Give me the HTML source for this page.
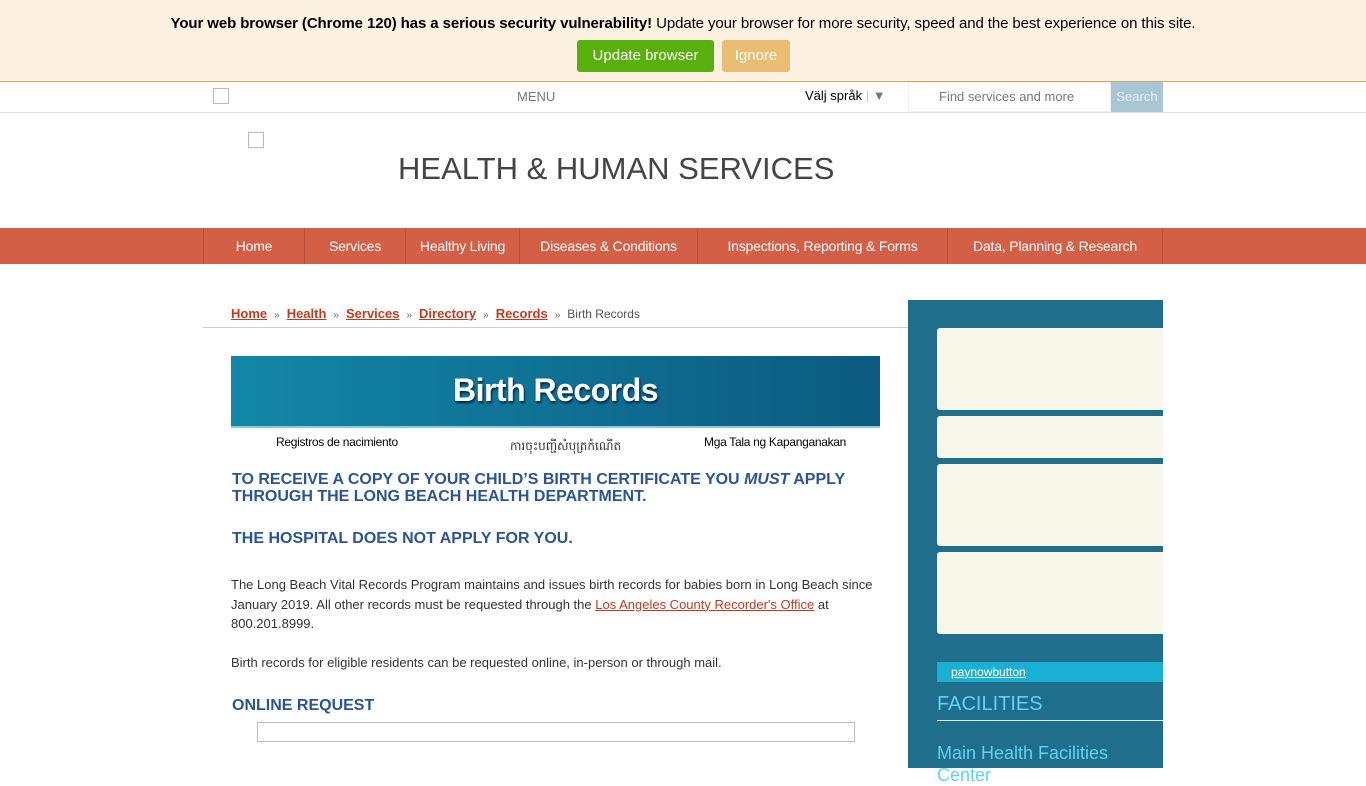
<!DOCTYPE html>
<html><head><meta charset="utf-8"><style>
*{box-sizing:border-box;margin:0;padding:0}
body{width:1366px;height:768px;overflow:hidden;font-family:"Liberation Sans",Arial,sans-serif;background:#fff;position:relative}
.abs{position:absolute}
#bar{left:0;top:0;width:1366px;height:82px;background:#fdf2e1;border-bottom:1px solid #c9a95c;text-align:center}
#bar p{position:absolute;top:15px;left:0;width:1366px;font-size:15px;color:#000;letter-spacing:-0.1px}
.btn{position:absolute;top:40px;height:32px;line-height:32px;color:#fff;font-size:15px;border-radius:3px;text-align:center}
#top{left:0;top:82px;width:1366px;height:31px;border-bottom:1px solid #ddd}
#nav{left:0;top:228px;width:1366px;height:36px;background:#d35f47}
#nav div{position:absolute;top:0;height:36px;line-height:36px;color:#fff;font-size:14px;text-align:center;border-left:1px solid #b94f3a;letter-spacing:-0.2px}
.bc a{color:#c23b1f;font-size:13px;text-decoration:underline;font-weight:bold}
.bc span{color:#666;font-size:10px;margin:0 7px}
h3{position:absolute;left:232px;color:#2a5592;font-size:16px;font-weight:bold;line-height:17px}
.t{position:absolute;left:231px;font-size:13px;color:#333;line-height:19.5px;width:650px}
.card{position:absolute;left:937px;width:226px;background:#f9f6ea;border-radius:3px 0 0 3px}
</style></head><body>
<div id="bar" class="abs"><p><b>Your web browser (Chrome 120) has a serious security vulnerability!</b> Update your browser for more security, speed and the best experience on this site.</p>
<div class="btn" style="left:577px;width:137px;background:#59b00d">Update browser</div>
<div class="btn" style="left:722px;width:68px;background:#e9be72">Ignore</div></div>
<div id="top" class="abs">
<div class="abs" style="left:213px;top:6px;width:16px;height:16px;border:1px solid #bbb"></div>
<div class="abs" style="left:517px;top:7px;font-size:13px;color:#777">MENU</div>
<div class="abs" style="left:805px;top:6px;font-size:13px;color:#000">Välj språk <span style="color:#ccc">|</span> <span style="color:#777">▼</span></div>
<div class="abs" style="left:908px;top:0;width:203px;height:30px;border:1px solid #eee;font-size:13px;color:#777;line-height:28px;padding-left:30px">Find services and more</div>
<div class="abs" style="left:1111px;top:0;width:52px;height:30px;background:#a9c6d4;color:#eef;font-size:13px;line-height:30px;text-align:center">Search</div>
</div>
<div class="abs" style="left:248px;top:132px;width:16px;height:16px;border:1px solid #bbb"></div>
<div class="abs" style="left:398px;top:151px;font-size:31px;color:#444">HEALTH &amp; HUMAN SERVICES</div>
<div id="nav" class="abs">
<div style="left:203px;width:101px">Home</div><div style="left:304px;width:101px">Services</div><div style="left:405px;width:114px">Healthy Living</div><div style="left:519px;width:178px">Diseases &amp; Conditions</div><div style="left:697px;width:250px">Inspections, Reporting &amp; Forms</div><div style="left:947px;width:216px;border-right:1px solid #b94f3a">Data, Planning &amp; Research</div></div>
<div class="abs bc" style="left:231px;top:305px"><a>Home</a><span>»</span><a>Health</a><span>»</span><a>Services</a><span>»</span><a>Directory</a><span>»</span><a>Records</a><span>»</span><font style="font-size:12px;color:#555">Birth Records</font></div>
<div class="abs" style="left:203px;top:327px;width:705px;height:1px;background:#ccc"></div>
<div class="abs" style="left:231px;top:356px;width:649px;height:70px;background:linear-gradient(90deg,#1287a8,#0c5a80);color:#fff;font-size:32px;font-weight:bold;text-align:center;line-height:68px;text-shadow:1px 2px 2px #024;letter-spacing:-0.5px">Birth Records</div>
<div class="abs" style="left:231px;top:426px;width:649px;height:2px;background:#8cc8dc"></div>
<div class="abs" style="left:276px;top:435px;font-size:12px;letter-spacing:-0.3px">Registros de nacimiento</div>
<div class="abs" style="left:510px;top:438px;font-size:12px;color:#333">ការចុះបញ្ជីសំបុត្រកំណើត</div>
<div class="abs" style="left:704px;top:435px;font-size:12px;letter-spacing:-0.3px">Mga Tala ng Kapanganakan</div>
<h3 style="top:471px">TO RECEIVE A COPY OF YOUR CHILD’S BIRTH CERTIFICATE YOU <i>MUST</i> APPLY<br>THROUGH THE LONG BEACH HEALTH DEPARTMENT.</h3>
<h3 style="top:530px">THE HOSPITAL DOES NOT APPLY FOR YOU.</h3>
<div class="t" style="top:575px">The Long Beach Vital Records Program maintains and issues birth records for babies born in Long Beach since January 2019. All other records must be requested through the <a style="color:#c23b1f;text-decoration:underline">Los Angeles County Recorder's Office</a> at 800.201.8999.</div>
<div class="t" style="top:653px">Birth records for eligible residents can be requested online, in-person or through mail.</div>
<h3 style="top:697px">ONLINE REQUEST</h3>
<div class="abs" style="left:257px;top:722px;width:598px;height:20px;border:1px solid #bbb"></div>
<div class="abs" style="left:908px;top:300px;width:255px;height:468px;background:#1f6e8c"></div>
<div class="card" style="top:328px;height:82px"></div>
<div class="card" style="top:416px;height:42px"></div>
<div class="card" style="top:464px;height:82px"></div>
<div class="card" style="top:552px;height:82px"></div>
<div class="abs" style="left:937px;top:662px;width:226px;height:20px;background:#1ab0d4;font-size:12px;color:#fff;line-height:20px;padding-left:14px;text-decoration:underline">paynowbutton</div>
<div class="abs" style="left:937px;top:693px;font-size:20px;color:#5fd3f2">FACILITIES</div>
<div class="abs" style="left:937px;top:720px;width:226px;height:1px;background:#dfeef4"></div>
<div class="abs" style="left:937px;top:742px;font-size:18px;color:#5fd3f2;line-height:22px">Main Health Facilities<br>Center</div>
</body></html>
